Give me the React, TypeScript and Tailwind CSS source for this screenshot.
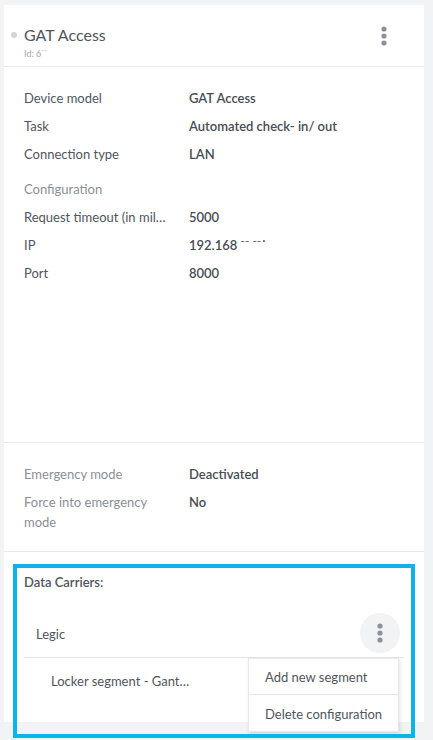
import React from "react";

const font = { fontFamily: "Lato, 'Noto Sans', sans-serif" };

function Dots({ className = "" }: { className?: string }) {
  return (
    <svg width="6" height="20" viewBox="0 0 6 20" className={className}>
      <circle cx="3" cy="3" r="2.6" fill="#8d9198" />
      <circle cx="3" cy="10" r="2.6" fill="#8d9198" />
      <circle cx="3" cy="17" r="2.6" fill="#8d9198" />
    </svg>
  );
}

function Row({ label, value, muted = false }: { label: string; value: string; muted?: boolean }) {
  return (
    <div className="flex text-[13px] leading-[20px]">
      <div className="w-[165px] shrink-0">
        <div
          className={muted ? "w-[150px] text-[#8a8f96]" : "w-[143px] text-[#50555d] truncate"}
        >
          {label}
        </div>
      </div>
      <div className="font-semibold text-[#474c53]">{value}</div>
    </div>
  );
}

export default function App() {
  return (
    <div className="relative w-[433px] h-[740px] overflow-hidden bg-[#f2f3f5]" style={font}>
      <div className="ml-[4px] mt-[5px] w-[420px] h-[717px] bg-white flex flex-col">
        {/* header */}
        <div className="h-[62px] shrink-0 border-b border-[#e6e8eb] flex items-start pl-[20px] pr-[37px] pt-[19px]">
          <div className="flex-1">
            <div className="flex items-center relative">
              <span className="absolute -left-[13px] top-[8px] w-[6px] h-[6px] rounded-full bg-[#d3d5d8]" />
              <span className="text-[16px] leading-[22px] text-[#50555d]">GAT Access</span>
            </div>
            <div className="text-[9px] leading-[12px] text-[#a3a7ad] mt-[2px]">Id: 6⁻⁻</div>
          </div>
          <Dots className="mt-[2px]" />
        </div>

        {/* device details */}
        <div className="h-[376px] shrink-0 border-b border-[#e6e8eb] pl-[20px] pt-[21px] flex flex-col">
          <div className="flex flex-col gap-[8px]">
            <Row label="Device model" value="GAT Access" />
            <Row label="Task" value="Automated check- in/ out" />
            <Row label="Connection type" value="LAN" />
          </div>
          <div className="mt-[15px] text-[13px] leading-[20px] text-[#8a8f96]">Configuration</div>
          <div className="mt-[8px] flex flex-col gap-[8px]">
            <Row label="Request timeout (in milliseconds)" value="5000" />
            <Row label="IP" value="192.168 ⁻⁻ ⁻⁻˙" />
            <Row label="Port" value="8000" />
          </div>
        </div>

        {/* emergency */}
        <div className="h-[109px] shrink-0 border-b border-[#e6e8eb] pl-[20px] pt-[21px] flex flex-col gap-[8px]">
          <Row label="Emergency mode" value="Deactivated" muted />
          <Row label="Force into emergency mode" value="No" muted />
        </div>

        {/* data carriers */}
        <div className="flex-1 px-[20px] pt-[20px]">
          <div className="text-[13px] leading-[20px] font-semibold text-[#50555d]">Data Carriers:</div>
          <div className="relative mt-[16px]">
            <div className="h-[50px] border-b border-[#e3e5e8] flex items-center justify-between pl-[12px] pr-[4px]">
              <span className="text-[13px] leading-[20px] pt-[2px] text-[#50555d]">Legic</span>
              <div className="w-[40px] h-[40px] rounded-full bg-[#f2f3f4] flex items-center justify-center">
                <Dots />
              </div>
            </div>
            <div className="h-[42px] flex items-center pl-[27px] pt-[3px]">
              <span className="w-[142px] truncate text-[13px] leading-[20px] text-[#50555d]">
                Locker segment - Gantner 1
              </span>
            </div>

            {/* actions menu */}
            <div className="absolute right-[5px] top-[50px] w-[151px] bg-white border border-[#e6e8eb] shadow-[1px_2px_4px_rgba(0,0,0,0.12)] text-[13px] text-[#50555d]">
              <div className="h-[36px] flex items-center pl-[16px] pt-[2px] border-b border-[#e3e5e8]">Add new segment</div>
              <div className="h-[36px] flex items-center pl-[16px] pt-[3px]">Delete configuration</div>
            </div>
          </div>
        </div>
      </div>

      {/* highlight frame */}
      <div className="absolute left-[13px] top-[564px] w-[402px] h-[174px] border-[4px] border-[#0cb4e9] pointer-events-none" />
    </div>
  );
}
